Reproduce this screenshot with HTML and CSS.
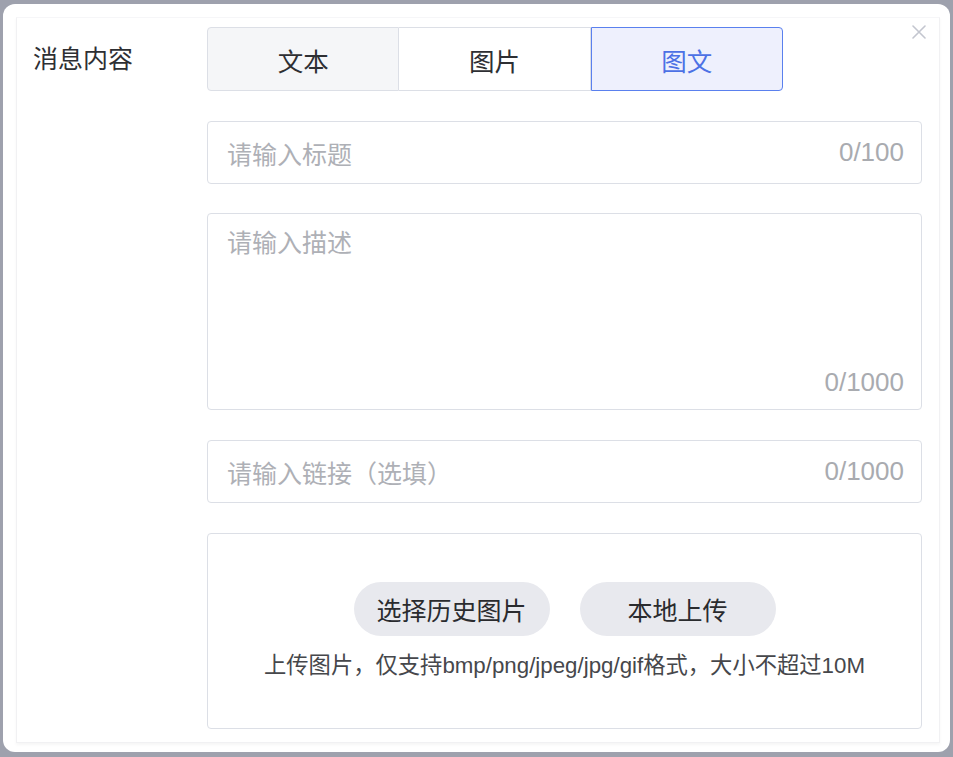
FILE: index.html
```html
<!DOCTYPE html>
<html lang="zh-CN">
<head>
<meta charset="utf-8">
<title>消息内容</title>
<link rel="stylesheet" href="styles.css">
</head>
<body>
<div class="modal">
  <div class="panel">
    <span class="close" aria-label="关闭">
      <svg width="14" height="14" viewBox="0 0 14 14"><path d="M1 1L13 13M13 1L1 13" stroke="#c3c6cf" stroke-width="1.6" fill="none" stroke-linecap="round"/></svg>
    </span>
    <div class="row">
      <div class="label">消息内容</div>
      <div class="content">
        <div class="tabs">
          <div class="tab tab-gray">文本</div>
          <div class="tab">图片</div>
          <div class="tab tab-active">图文</div>
        </div>
        <div class="field field-input">
          <span class="placeholder">请输入标题</span>
          <span class="count">0/100</span>
        </div>
        <div class="field field-area">
          <span class="placeholder">请输入描述</span>
          <span class="count">0/1000</span>
        </div>
        <div class="field field-input">
          <span class="placeholder">请输入链接（选填）</span>
          <span class="count">0/1000</span>
        </div>
        <div class="upload">
          <div class="btns">
            <div class="btn">选择历史图片</div>
            <div class="btn">本地上传</div>
          </div>
          <div class="hint">上传图片，仅支持bmp/png/jpeg/jpg/gif格式，大小不超过10M</div>
        </div>
      </div>
    </div>
  </div>
</div>
</body>
</html>
```
FILE: styles.css
```css
* { box-sizing: border-box; }
html, body { margin: 0; padding: 0; }
body {
  background: #9ea1ad;
  font-family: "Liberation Sans", "Noto Sans CJK SC", sans-serif;
  width: 953px;
  height: 757px;
  overflow: hidden;
}
.modal {
  margin: 4px 0 0 3px;
  width: 947px;
  height: 748px;
  background: #ffffff;
  border-radius: 12px;
  padding: 13px 10px 0 13px;
}
.panel {
  position: relative;
  width: 924px;
  height: 726px;
  background: #ffffff;
  border: 1px solid #f1f1f3;
  border-top-color: #f6f6f8;
  box-shadow: 0 2px 3px rgba(0,0,0,0.04);
  padding: 9px 0 0 16px;
}
.close {
  position: absolute;
  right: 13px;
  top: 7px;
  width: 14px;
  height: 14px;
  display: block;
}
.close svg { display: block; }
.row {
  display: flex;
}
.label {
  width: 174px;
  flex: none;
  font-size: 25px;
  line-height: 64px;
  color: #2e2f33;
}
.content {
  width: 715px;
  display: flex;
  flex-direction: column;
  gap: 30px;
}
.tabs {
  display: flex;
  width: 576px;
  height: 64px;
}
.tab {
  flex: 1;
  display: flex;
  align-items: center;
  justify-content: center;
  font-size: 25.5px;
  color: #2e2f33;
  border: 1px solid #dcdfe6;
  border-left: none;
  background: #ffffff;
}
.tab-gray {
  background: #f5f6f8;
  border-left: 1px solid #dcdfe6;
  border-radius: 4px 0 0 4px;
}
.tab-active {
  background: #eef0fd;
  border: 1px solid #5a80ee;
  color: #4c71e5;
  border-radius: 0 4px 4px 0;
}
.field {
  position: relative;
  border: 1px solid #dcdfe6;
  border-radius: 4px;
  background: #fff;
  font-size: 25px;
  color: #aaadb3;
}
.field-input {
  height: 63px;
  display: flex;
  align-items: center;
  justify-content: space-between;
  padding: 0 17px 0 19px;
}
.field-area {
  height: 197px;
  margin-top: -1px;
  display: flex;
  flex-direction: column;
  justify-content: space-between;
  padding: 11px 17px 9px 19px;
  line-height: 36px;
}
.field-area .count { align-self: flex-end; }
.placeholder { color: #aeb0b6; }
.count { color: #a9abb0; font-size: 26px; }
.upload {
  height: 196px;
  border: 1px solid #dcdfe6;
  border-radius: 4px;
  display: flex;
  flex-direction: column;
  align-items: center;
  justify-content: flex-start;
  gap: 17px;
  padding-top: 48px;
}
.btns {
  display: flex;
  gap: 30px;
}
.btn {
  width: 196px;
  height: 54px;
  border-radius: 27px;
  background: #e8e9ee;
  display: flex;
  align-items: center;
  justify-content: center;
  font-size: 25px;
  color: #2a2b2e;
}
.hint {
  font-size: 22.3px;
  line-height: 26px;
  color: #46474b;
}
```
